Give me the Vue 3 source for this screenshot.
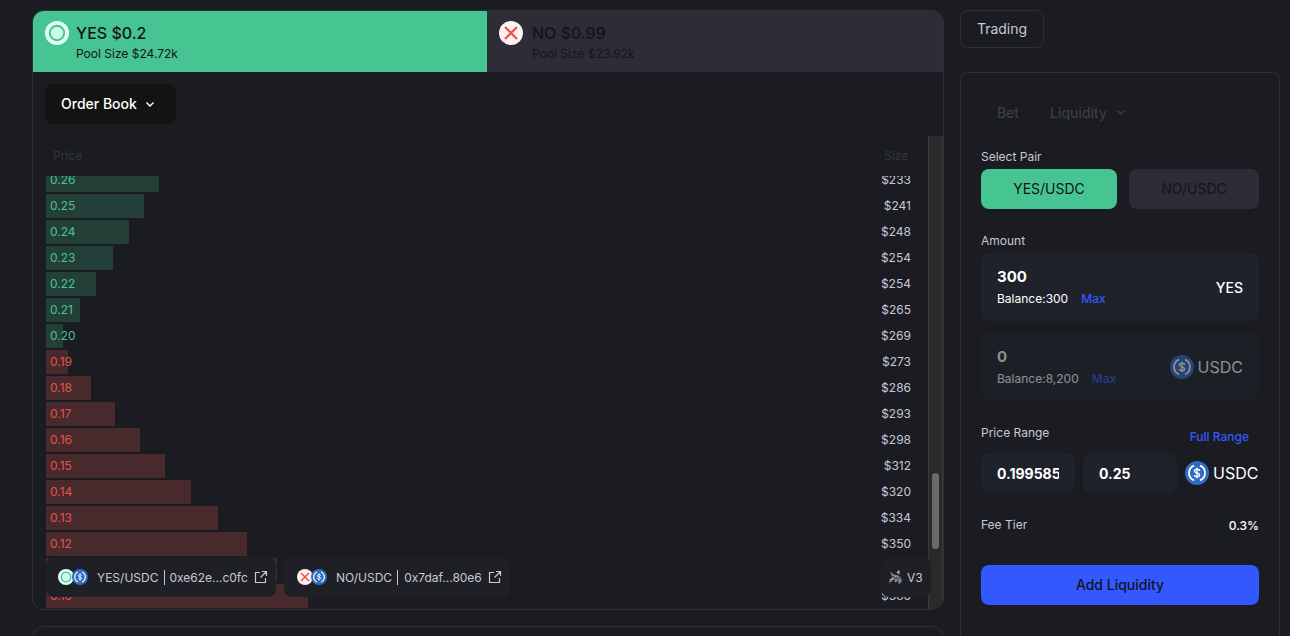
<template>
  <div class="page">
    <div class="left">
      <section class="panel">
        <div class="tabs">
          <div class="tab yes">
            <svg class="tab-icon" viewBox="0 0 24 24"><circle cx="12" cy="12" r="12" fill="#e2fff6" /><circle cx="12" cy="12" r="7.2" fill="#cdf8ea" stroke="#46c492" stroke-width="2" /></svg>
            <div>
              <div class="tab-title">YES $0.2</div>
              <div class="tab-sub">Pool Size $24.72k</div>
            </div>
          </div>
          <div class="tab no">
            <svg class="tab-icon" viewBox="0 0 24 24"><circle cx="12" cy="12" r="12" fill="#fff0f1" /><path d="M6 6l12 12M18 6L6 18" stroke="#e5534b" stroke-width="2.2" /></svg>
            <div>
              <div class="tab-title">NO $0.99</div>
              <div class="tab-sub">Pool Size $23.92k</div>
            </div>
          </div>
        </div>
        <div class="toolbar">
          <button class="book-select">
            Order Book
            <svg width="12" height="12" viewBox="0 0 12 12"><path d="M2.5 4.5L6 8l3.5-3.5" fill="none" stroke="#fff" stroke-width="1.4" /></svg>
          </button>
        </div>
        <div class="book">
          <div class="book-main">
            <div class="book-head"><span>Price</span><span>Size</span></div>
            <div class="book-rows">
              <div class="rows-inner">
                <div v-for="row in rows" :key="row.price" :class="['row', row.side]">
                  <div class="bar" :style="{ width: row.width + 'px' }"></div>
                  <span class="price">{{ row.price }}</span>
                  <span class="size">{{ row.size }}</span>
                </div>
              </div>
            </div>
          </div>
          <div class="scrollbar"><div class="thumb"></div></div>
          <div class="chip chip-yes">
            <span class="pair-icons">
              <svg class="pair-a" viewBox="0 0 24 24"><circle cx="12" cy="12" r="12" fill="#e2fff6" /><circle cx="12" cy="12" r="7.2" fill="#cdf8ea" stroke="#46c492" stroke-width="2" /></svg>
              <svg class="pair-b" viewBox="0 0 24 24"><circle cx="12" cy="12" r="12" fill="#2f6cc4" /><path d="M9 4.600a8 8 0 0 0 0 14.800M15 4.600a8 8 0 0 1 0 14.800" fill="none" stroke="#fff" stroke-width="1.800" /><path d="M14.600 10c0-1.100-1.100-1.700-2.600-1.700s-2.600.7-2.600 1.800c0 2.500 5.200 1.300 5.200 3.800 0 1.100-1.100 1.800-2.600 1.800s-2.600-.7-2.600-1.700M12 6.800v10.400" fill="none" stroke="#fff" stroke-width="1.400" /></svg>
            </span>
            <span>YES/USDC</span><i class="sep"></i><span>0xe62e...c0fc</span>
            <svg class="ext" viewBox="0 0 14 14"><path d="M6 2.500H1.500v10h10V8M8 1.500h4.500V6M12.500 1.500L6.500 7.500" fill="none" stroke="#c8c9d6" stroke-width="1.200" /></svg>
          </div>
          <div class="chip chip-no">
            <span class="pair-icons">
              <svg class="pair-a" viewBox="0 0 24 24"><circle cx="12" cy="12" r="12" fill="#fff0f1" /><path d="M6 6l12 12M18 6L6 18" stroke="#e5534b" stroke-width="2.2" /></svg>
              <svg class="pair-b" viewBox="0 0 24 24"><circle cx="12" cy="12" r="12" fill="#2f6cc4" /><path d="M9 4.600a8 8 0 0 0 0 14.800M15 4.600a8 8 0 0 1 0 14.800" fill="none" stroke="#fff" stroke-width="1.800" /><path d="M14.600 10c0-1.100-1.100-1.700-2.600-1.700s-2.600.7-2.600 1.800c0 2.500 5.200 1.300 5.200 3.800 0 1.100-1.100 1.800-2.600 1.800s-2.600-.7-2.600-1.700M12 6.800v10.400" fill="none" stroke="#fff" stroke-width="1.400" /></svg>
            </span>
            <span>NO/USDC</span><i class="sep"></i><span>0x7daf...80e6</span>
            <svg class="ext" viewBox="0 0 14 14"><path d="M6 2.500H1.500v10h10V8M8 1.500h4.500V6M12.500 1.500L6.500 7.500" fill="none" stroke="#c8c9d6" stroke-width="1.200" /></svg>
          </div>
          <div class="chip chip-v3">
            <svg class="uni" viewBox="0 0 16 16">
              <path d="M2.500 1.500C4.500 4 6 5 8.500 5.400 11.500 5.800 14 7.500 14.500 10.500 14.800 12.700 13.400 14.500 11 15 11.800 13.500 11.500 12.200 10.500 11.300 9.700 12.600 8.300 13.300 6.600 12.800 7.500 12 7.600 11 7 10.200 5.300 10.500 3.700 9.800 3 8.400 4 8.500 4.900 8 5 7.200 3.700 5.800 2.800 3.700 2.500 1.500Z" fill="#8d8e99" />
              <path d="M5.500 6.500l3 3.500M8.500 7.500l3 3.500M11 7l2 3" fill="none" stroke="#1e2026" stroke-width="1" />
              <path d="M1.500 13l3.500-3M9.500 3.500L11.500 1l.3 3.500M2 10.500l1.500-1" fill="none" stroke="#c8c9d6" stroke-width="1.100" />
            </svg>
            <span>V3</span>
          </div>
        </div>
      </section>
      <section class="panel-next"></section>
    </div>

    <div class="right">
      <div class="mode-tab">Trading</div>
      <section class="card">
        <div class="card-tabs">
          <span>Bet</span>
          <span class="liq">
            Liquidity
            <svg width="12" height="12" viewBox="0 0 12 12"><path d="M2.500 4.500L6 8l3.500-3.500" fill="none" stroke="#3f414a" stroke-width="1.400" /></svg>
          </span>
        </div>
        <div class="label">Select Pair</div>
        <div class="pairs">
          <button class="pair on">YES/USDC</button>
          <button class="pair off">NO/USDC</button>
        </div>
        <div class="label amount-label">Amount</div>
        <div class="amount">
          <div>
            <div class="amount-value">300</div>
            <div class="balance">Balance:300<span class="max">Max</span></div>
          </div>
          <span class="token">YES</span>
        </div>
        <div class="amount dim">
          <div>
            <div class="amount-value">0</div>
            <div class="balance">Balance:8,200<span class="max">Max</span></div>
          </div>
          <span class="token usdc">
            <svg class="usdc-icon" viewBox="0 0 24 24"><circle cx="12" cy="12" r="12" fill="#2f6cc4" /><path d="M9 4.600a8 8 0 0 0 0 14.800M15 4.600a8 8 0 0 1 0 14.800" fill="none" stroke="#fff" stroke-width="1.800" /><path d="M14.600 10c0-1.100-1.100-1.700-2.600-1.700s-2.600.7-2.600 1.800c0 2.500 5.200 1.300 5.200 3.800 0 1.100-1.100 1.800-2.600 1.800s-2.600-.7-2.600-1.700M12 6.800v10.400" fill="none" stroke="#fff" stroke-width="1.400" /></svg>
            USDC
          </span>
        </div>
        <div class="range-head">
          <span class="label">Price Range</span>
          <span class="full">Full Range</span>
        </div>
        <div class="range">
          <div class="range-input"><span>0.199585</span></div>
          <div class="range-input"><span>0.25</span></div>
          <span class="token usdc range-token">
            <svg class="usdc-icon" viewBox="0 0 24 24"><circle cx="12" cy="12" r="12" fill="#2f6cc4" /><path d="M9 4.600a8 8 0 0 0 0 14.800M15 4.600a8 8 0 0 1 0 14.800" fill="none" stroke="#fff" stroke-width="1.800" /><path d="M14.600 10c0-1.100-1.100-1.700-2.600-1.700s-2.600.7-2.600 1.800c0 2.500 5.200 1.300 5.200 3.800 0 1.100-1.100 1.800-2.600 1.800s-2.600-.7-2.600-1.700M12 6.800v10.400" fill="none" stroke="#fff" stroke-width="1.400" /></svg>
            USDC
          </span>
        </div>
        <div class="fee">
          <span class="label">Fee Tier</span>
          <span class="fee-value">0.3%</span>
        </div>
        <button class="add">Add Liquidity</button>
      </section>
    </div>
  </div>
</template>

<script setup>
const rows = [
  { price: '0.26', size: '$233', width: 113, side: 'up' },
  { price: '0.25', size: '$241', width: 98, side: 'up' },
  { price: '0.24', size: '$248', width: 83, side: 'up' },
  { price: '0.23', size: '$254', width: 67, side: 'up' },
  { price: '0.22', size: '$254', width: 50, side: 'up' },
  { price: '0.21', size: '$265', width: 34, side: 'up' },
  { price: '0.20', size: '$269', width: 17, side: 'up' },
  { price: '0.19', size: '$273', width: 22, side: 'down' },
  { price: '0.18', size: '$286', width: 45, side: 'down' },
  { price: '0.17', size: '$293', width: 69, side: 'down' },
  { price: '0.16', size: '$298', width: 94, side: 'down' },
  { price: '0.15', size: '$312', width: 119, side: 'down' },
  { price: '0.14', size: '$320', width: 145, side: 'down' },
  { price: '0.13', size: '$334', width: 172, side: 'down' },
  { price: '0.12', size: '$350', width: 201, side: 'down' },
  { price: '0.11', size: '$366', width: 231, side: 'down' },
  { price: '0.10', size: '$386', width: 262, side: 'down' }
]
</script>

<style>
html,
body {
  margin: 0;
  background: #1a1c22;
}
</style>

<style scoped>
.page {
  display: flex;
  gap: 16px;
  height: 636px;
  padding: 10px 10px 0 32px;
  box-sizing: border-box;
  overflow: hidden;
  background: #1a1c22;
  font-family: Inter, "Liberation Sans", sans-serif;
  color: #c8c9d6;
}

button {
  font-family: inherit;
  border: none;
  cursor: pointer;
}

.left {
  width: 912px;
  flex-shrink: 0;
  display: flex;
  flex-direction: column;
  gap: 16px;
}

.panel {
  height: 600px;
  box-sizing: border-box;
  flex-shrink: 0;
  border: 1px solid #2e3038;
  border-radius: 12px;
  overflow: hidden;
  display: flex;
  flex-direction: column;
}

.panel-next {
  height: 100px;
  flex-shrink: 0;
  border: 1px solid #2e3038;
  border-radius: 12px;
}

.tabs {
  display: flex;
  height: 61px;
}

.tab {
  width: 50%;
  display: flex;
  align-items: flex-start;
  gap: 7px;
  padding: 10px 12px 0;
  box-sizing: border-box;
  color: #13141a;
}

.tab.yes {
  background: #46c492;
  width: 454px;
}

.tab.no {
  background: #2d2d38;
  flex: 1;
  gap: 9px;
}

.tab-icon {
  width: 24px;
  height: 24px;
  flex-shrink: 0;
}

.tab-title {
  font-size: 16px;
  font-weight: 500;
  line-height: 24px;
}

.tab-sub {
  font-size: 12px;
  line-height: 16px;
  margin-top: 1px;
}

.toolbar {
  padding: 12px;
  height: 64px;
  box-sizing: border-box;
}

.book-select {
  width: 131px;
  height: 40px;
  border-radius: 8px;
  background: #131313;
  color: #fff;
  font-size: 14px;
  font-weight: 500;
  display: flex;
  align-items: center;
  gap: 7px;
  padding: 0 0 2px 16px;
}

.book-select svg {
  margin-top: 2px;
}

.book {
  position: relative;
  flex: 1;
  min-height: 0;
  display: flex;
}

.book-main {
  flex: 1;
  min-width: 0;
  padding-left: 13px;
  display: flex;
  flex-direction: column;
}

.book-head {
  height: 38px;
  margin-bottom: 2px;
  flex-shrink: 0;
  display: flex;
  align-items: center;
  justify-content: space-between;
  padding: 0 20px 0 7px;
  font-size: 12px;
  color: #32343c;
}

.book-rows {
  flex: 1;
  min-height: 0;
  overflow: hidden;
}

.rows-inner {
  margin-top: -8px;
  display: flex;
  flex-direction: column;
  gap: 2px;
}

.row {
  position: relative;
  height: 24px;
  box-sizing: border-box;
  flex-shrink: 0;
  display: flex;
  align-items: center;
  justify-content: space-between;
  padding: 0 17px 2px 4px;
  font-size: 12px;
}

.bar {
  position: absolute;
  left: 0;
  top: 0;
  bottom: 0;
}

.row.up .bar {
  background: #243f38;
}

.row.down .bar {
  background: #482a2d;
}

.price {
  position: relative;
}

.row.up .price {
  color: #46c492;
}

.row.down .price {
  color: #e5534b;
}

.size {
  color: #c8c9d6;
}

.scrollbar {
  width: 15px;
  flex-shrink: 0;
  box-sizing: border-box;
  background: #2a2a2a;
  border-left: 1px solid #3a3a3a;
  border-right: 1px solid #3a3a3a;
  padding: 337px 3px 0;
}

.thumb {
  height: 76px;
  border-radius: 4px;
  background: #6b6b6b;
}

.chip {
  position: absolute;
  top: 421px;
  height: 40px;
  box-sizing: border-box;
  display: flex;
  align-items: center;
  border-radius: 8px;
  background: #1e2026;
  font-size: 12px;
  color: #c8c9d6;
  padding-left: 12px;
}

.chip-yes {
  left: 13px;
  width: 230px;
}

.chip-no {
  left: 251px;
  width: 226px;
  padding-left: 13px;
}

.chip-v3 {
  left: 848px;
  width: 50px;
  padding-left: 7px;
  gap: 4px;
}

.pair-icons {
  position: relative;
  width: 30px;
  height: 16px;
  margin-right: 9px;
  flex-shrink: 0;
}

.pair-a,
.pair-b {
  position: absolute;
  top: 0;
  width: 16px;
  height: 16px;
}

.pair-a {
  left: 0;
}

.pair-b {
  left: 14px;
}

.sep {
  width: 1px;
  height: 15px;
  margin: 0 4px 0 6px;
  background: #c8c9d6;
}

.chip-no .sep {
  margin: 0 6px 0 5px;
}

.ext {
  width: 14px;
  height: 14px;
  margin-left: 6px;
}

.chip-no .ext {
  margin-left: 6px;
}

.uni {
  width: 15px;
  height: 15px;
}

.right {
  width: 320px;
  flex-shrink: 0;
  display: flex;
  flex-direction: column;
  align-items: flex-start;
  gap: 24px;
}

.mode-tab {
  height: 38px;
  width: 84px;
  box-sizing: border-box;
  border: 1px solid #2e3038;
  border-radius: 8px;
  font-size: 14px;
  line-height: 36px;
  text-align: center;
}

.card {
  width: 320px;
  height: 640px;
  flex-shrink: 0;
  box-sizing: border-box;
  border: 1px solid #2e3038;
  border-radius: 8px;
  padding: 27px 20px 0;
}

.card-tabs {
  display: flex;
  gap: 31px;
  padding-left: 16px;
  height: 24px;
  align-items: center;
  font-size: 14px;
  color: #3f414a;
}

.liq {
  display: flex;
  align-items: center;
  gap: 8px;
  letter-spacing: 0.1px;
}

.label {
  font-size: 12px;
  line-height: 16px;
  color: #c8c9d6;
}

.card-tabs + .label {
  margin-top: 25px;
}

.pairs {
  display: flex;
  gap: 12px;
  margin-top: 4px;
}

.pair {
  height: 40px;
  border-radius: 8px;
  font-size: 14px;
  color: #13141a;
  padding: 0 0 2px;
}

.pair.on {
  width: 136px;
  background: #46c492;
}

.pair.off {
  width: 130px;
  background: #2d2d38;
}

.amount-label {
  margin-top: 24px;
}

.amount {
  margin-top: 4px;
  height: 68px;
  box-sizing: border-box;
  width: 278px;
  border-radius: 8px;
  background: #1f222b;
  display: flex;
  align-items: center;
  justify-content: space-between;
  padding: 0 16px;
}

.amount.dim {
  margin-top: 12px;
  opacity: 0.5;
}

.amount-value {
  font-size: 15px;
  font-weight: 700;
  line-height: 20px;
  color: #fff;
}

.balance {
  font-size: 12px;
  line-height: 16px;
  margin-top: 4px;
  color: #fff;
}

.max {
  color: #3358ff;
  margin-left: 13px;
  font-weight: 500;
}

.token {
  font-size: 14px;
  font-weight: 500;
  color: #fff;
}

.usdc {
  display: flex;
  align-items: center;
  gap: 4px;
  font-size: 16px;
  font-weight: 400;
}

.usdc-icon {
  width: 24px;
  height: 24px;
}

.range-head {
  display: flex;
  justify-content: space-between;
  margin: 24px 0 8px;
  padding-right: 10px;
}

.full {
  font-size: 12px;
  font-weight: 500;
  line-height: 16px;
  margin-top: 4px;
  color: #3358ff;
}

.range {
  display: flex;
  align-items: center;
  gap: 8px;
}

.range-input {
  width: 94px;
  height: 40px;
  box-sizing: border-box;
  padding: 0 16px;
  border-radius: 8px;
  background: #1f222b;
  display: flex;
  align-items: center;
  overflow: hidden;
  font-size: 14px;
  font-weight: 700;
  color: #fff;
}

.range-input span {
  display: block;
  width: 100%;
  overflow: hidden;
  white-space: nowrap;
}

.range-token {
  flex-shrink: 0;
}

.fee {
  display: flex;
  justify-content: space-between;
  align-items: center;
  width: 278px;
  margin-top: 24px;
}

.fee-value {
  font-size: 12px;
  font-weight: 500;
  color: #fff;
}

.add {
  display: block;
  width: 278px;
  height: 40px;
  margin-top: 32px;
  border-radius: 8px;
  background: #3358ff;
  color: #13141a;
  font-size: 14px;
  font-weight: 500;
  padding: 0 0 2px;
}
</style>
